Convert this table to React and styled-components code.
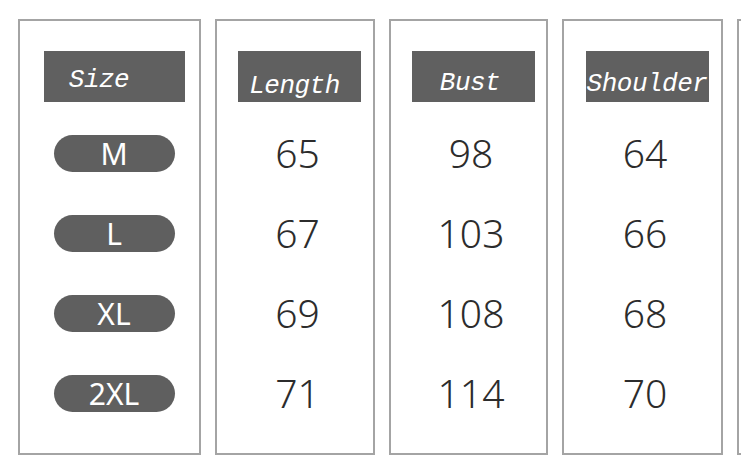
import React from 'react'
import styled, { createGlobalStyle } from 'styled-components'

const GlobalStyle = createGlobalStyle`
html, body {
  margin: 0;
  padding: 0;
  background: #ffffff;
  overflow: hidden;
}
`

const columns = [
  { title: 'Size', shift: 30, lift: 9, width: 183, pills: true, values: ['M', 'L', 'XL', '2XL'] },
  { title: 'Length', shift: 10, lift: 3, width: 160, values: ['65', '67', '69', '71'] },
  { title: 'Bust', shift: 6, lift: 6, width: 159, values: ['98', '103', '108', '114'] },
  { title: 'Shoulder', shift: 0, lift: 5, width: 161, values: ['64', '66', '68', '70'] },
]

const SizeChart = () => {
  return (
    <Page>
      <GlobalStyle />
      <Table>
        {columns.map((col) => (
          <Column key={col.title} $width={col.width}>
            <Header $shift={col.shift} $lift={col.lift} $wide={col.pills}>
              {col.title}
            </Header>
            {col.values.map((v) => (
              <Row key={v}>
                {col.pills ? <Pill>{v}</Pill> : <Value>{v}</Value>}
              </Row>
            ))}
          </Column>
        ))}
        <Column $width={160} />
      </Table>
    </Page>
  )
}

const Page = styled.div`
width: 741px;
height: 467px;
overflow: hidden;
`

const Table = styled.div`
display: flex;
gap: 14px;
padding: 19px 0 0 18px;
`

const Column = styled.div`
flex: 0 0 ${(p) => p.$width}px;
height: 436px;
box-sizing: border-box;
border: 2px solid #a4a4a4;
display: flex;
flex-direction: column;
align-items: center;
padding: 30px 0 0 9px;
`

const Header = styled.div`
width: ${(p) => (p.$wide ? 141 : 123)}px;
height: 51px;
box-sizing: border-box;
background: #606060;
color: #ffffff;
font-family: "Liberation Mono", "DejaVu Sans Mono", monospace;
font-style: italic;
font-size: 26px;
letter-spacing: -0.5px;
line-height: 26px;
white-space: nowrap;
display: flex;
align-items: flex-end;
justify-content: center;
padding-right: ${(p) => p.$shift}px;
padding-bottom: ${(p) => p.$lift}px;
margin-bottom: 11px;
`

const Row = styled.div`
height: 80px;
width: 100%;
display: flex;
align-items: center;
justify-content: center;
`

const Pill = styled.div`
width: 121px;
height: 37px;
border-radius: 19px;
background: #5f5f5f;
color: #ffffff;
font-family: "Noto Sans", "Open Sans", sans-serif;
font-weight: 400;
font-size: 30px;
line-height: 37px;
text-align: center;
`

const Value = styled.div`
color: #2c2c2c;
font-family: "Noto Sans", "Open Sans", sans-serif;
font-weight: 350;
font-size: 39px;
line-height: 40px;
margin-right: 4px;
`

export default SizeChart
